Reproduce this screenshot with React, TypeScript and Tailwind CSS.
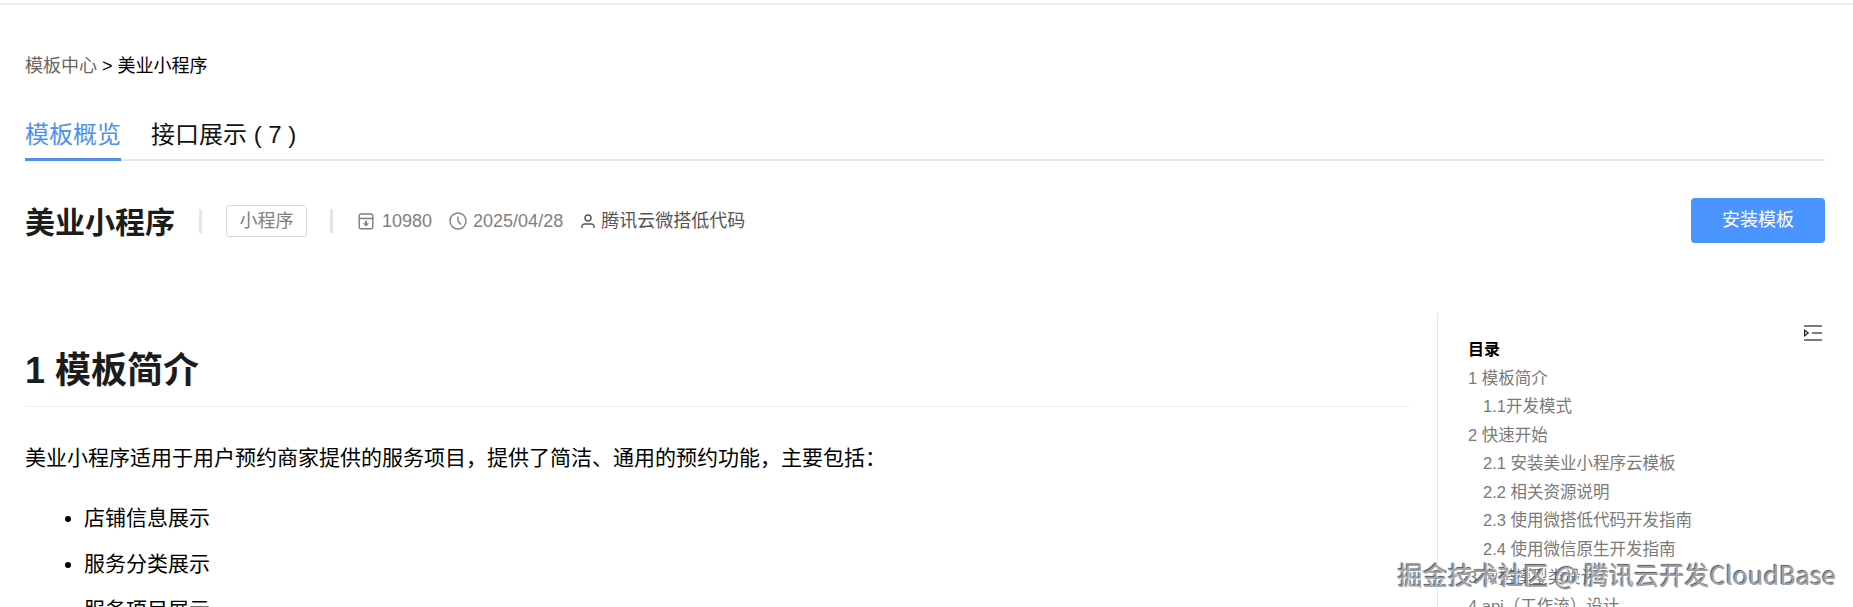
const cjk = "font-['Liberation_Sans','Noto_Sans_CJK_SC',sans-serif]";

const toc = [
  { label: "1 模板简介", sub: false },
  { label: "1.1开发模式", sub: true },
  { label: "2 快速开始", sub: false },
  { label: "2.1 安装美业小程序云模板", sub: true },
  { label: "2.2 相关资源说明", sub: true },
  { label: "2.3 使用微搭低代码开发指南", sub: true },
  { label: "2.4 使用微信原生开发指南", sub: true },
  { label: "3 微搭模型类设计", sub: false },
  { label: "4 api（工作流）设计", sub: false },
];

function ArchiveIcon() {
  return (
    <svg width="16" height="17" viewBox="0 0 16 17" fill="none" stroke="#7f7f7f" strokeWidth="1.4">
      <path d="M1.2 5.5V14.3A1.5 1.5 0 0 0 2.7 15.8H13.3A1.5 1.5 0 0 0 14.8 14.3V5.5" />
      <path d="M1.2 5.5V3A2 2 0 0 1 3.2 1H12.8A2 2 0 0 1 14.8 3V5.5Z" />
      <path d="M8 7.8V10.5" strokeWidth="2" />
      <path d="M4.8 10.2H11.2L8 13.4Z" fill="#7f7f7f" stroke="none" />
    </svg>
  );
}

function ClockIcon() {
  return (
    <svg width="18" height="18" viewBox="0 0 18 18" fill="none" stroke="#7f7f7f" strokeWidth="1.4">
      <circle cx="9" cy="9" r="8" />
      <path d="M9 4.5V9.3L12 12.5" />
    </svg>
  );
}

function UserIcon() {
  return (
    <svg width="14" height="15" viewBox="0 0 14 15" fill="none" stroke="#555" strokeWidth="1.4">
      <circle cx="7" cy="4" r="3" />
      <path d="M1 14V12.5A2.5 2.5 0 0 1 3.5 10H10.5A2.5 2.5 0 0 1 13 12.5V14" />
    </svg>
  );
}

function OutlineIcon() {
  return (
    <svg width="18" height="16" viewBox="0 0 18 16" fill="none" stroke="#222">
      <path d="M0 1H18" strokeWidth="1.2" />
      <path d="M0 15H18" strokeWidth="1.2" />
      <path d="M0.6 5.3L4.2 8L0.6 10.7Z" strokeWidth="1.2" />
      <path d="M8 8H18" strokeWidth="1.2" />
    </svg>
  );
}

export default function App() {
  return (
    <div className={`relative h-[607px] overflow-hidden bg-white ${cjk}`}>
      <div className="mt-[3px] h-[2px] bg-[#eeeeee]" />

      <div className="px-[25px] pr-[28px]">
        <div className="mt-[49px] text-lg leading-6 text-black">
          <span className="text-[#666666]">模板中心</span> &gt; 美业小程序
        </div>

        <div className="mt-[34px] flex h-[49px] gap-[30px] border-b-2 border-[#e8e8e8] text-2xl leading-[45px]">
          <div className="-mb-[2px] border-b-[3px] border-[#4f90e8] text-[#4f90e8]">模板概览</div>
          <div className="text-[#111111]">接口展示 ( 7 )</div>
        </div>

        <div className="mt-[37px] flex h-[46px] items-center">
          <h1 className="w-[149px] pt-[2px] text-[30px] font-bold whitespace-nowrap text-[#1c1c1c]">美业小程序</h1>
          <div className="ml-[25px] h-[24px] w-[3px] bg-[#e5e5e5]" />
          <div className="ml-[24px] flex h-[32px] w-[81px] items-center justify-center rounded-[3px] border border-[#d9d9d9] text-lg text-[#808080]">
            小程序
          </div>
          <div className="ml-[23px] h-[24px] w-[3px] bg-[#e5e5e5]" />
          <div className="ml-[25px] flex items-center gap-[8px] text-lg text-[#808080]">
            <ArchiveIcon />
            10980
          </div>
          <div className="ml-[17px] flex items-center gap-[6px] text-lg text-[#808080]">
            <ClockIcon />
            2025/04/28
          </div>
          <div className="ml-[18px] flex items-center gap-[6px] text-lg text-[#555555]">
            <UserIcon />
            腾讯云微搭低代码
          </div>
          <button className="-mt-[2px] ml-auto h-[45px] w-[134px] rounded-[4px] bg-[#4a94ff] text-lg text-white">
            安装模板
          </button>
        </div>

        <div className="mt-[69px] flex">
          <main className="w-[1384px] shrink-0 text-[21px] text-black">
            <h2 className="border-b border-[#eeeeee] pt-[32px] pb-[9px] text-4xl leading-[52px] font-bold text-[#1c1c1c]">
              1 模板简介
            </h2>
            <p className="mt-[34px] leading-[34px]">
              美业小程序适用于用户预约商家提供的服务项目，提供了简洁、通用的预约功能，主要包括：
            </p>
            <ul className="mt-[26px] list-disc pl-[59px] leading-[34px]">
              <li className="mb-[12px]">店铺信息展示</li>
              <li className="mb-[12px]">服务分类展示</li>
              <li className="mb-[12px]">服务项目展示</li>
            </ul>
          </main>

          <aside className="relative ml-[28px] flex-1 border-l border-[#e5e5e5] pt-[23px] pl-[30px]">
            <div className="absolute top-[12px] right-[3px]">
              <OutlineIcon />
            </div>
            <div className="text-base leading-[27.5px] font-bold text-black">目录</div>
            {toc.map((t) => (
              <div
                key={t.label}
                className={`text-[16.5px] leading-[28.5px] text-[#7a7a7a] ${t.sub ? "pl-[15px]" : ""}`}
              >
                {t.label}
              </div>
            ))}
          </aside>
        </div>
      </div>

      <div className="absolute top-[556px] right-[17px] font-['Noto_Sans_CJK_SC',sans-serif] text-[25px] leading-[36px] tracking-[0.15px] text-[#a0a0a0] [text-shadow:1px_1px_1px_#ffffff,-1px_-1px_1px_#555555]">
        掘金技术社区 @ 腾讯云开发CloudBase
      </div>
    </div>
  );
}
